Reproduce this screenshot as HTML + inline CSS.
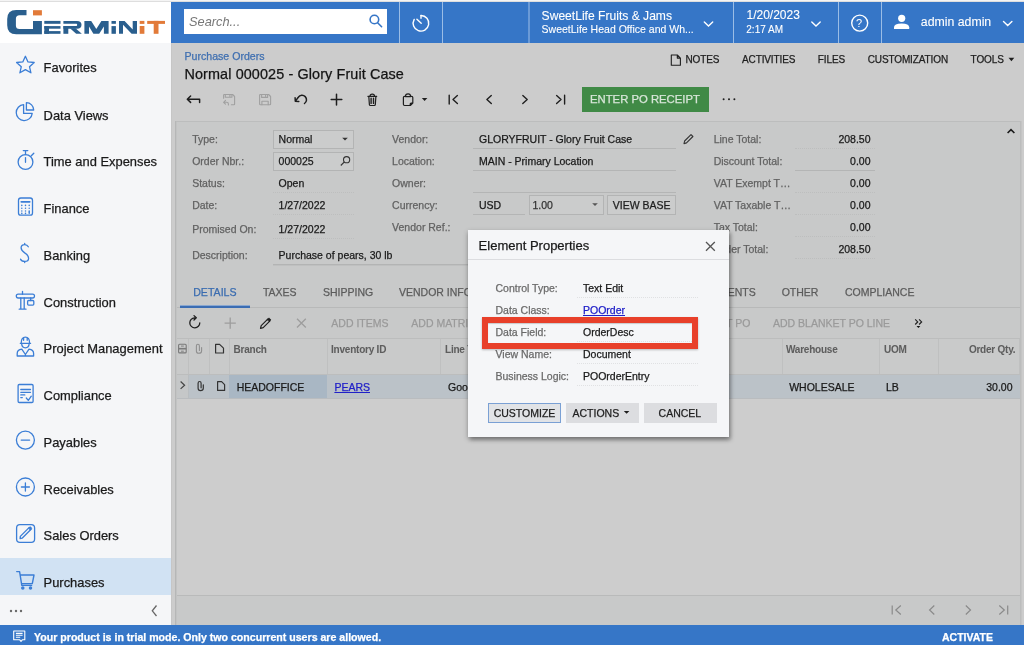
<!DOCTYPE html>
<html><head><meta charset="utf-8"><style>
*{box-sizing:border-box;margin:0;padding:0}
html,body{width:1024px;height:645px;overflow:hidden;background:#cccccc;font-family:"Liberation Sans",sans-serif;color:#1c1c1c;position:relative}
.a{position:absolute;white-space:nowrap;line-height:1;-webkit-text-stroke:0.25px currentColor}
svg{position:absolute;left:0;top:0;overflow:visible}
</style></head><body><div id="root" style="position:absolute;left:0;top:0;width:1024px;height:645px;will-change:transform">
<div class="a" style="left:0px;top:0px;width:1024px;height:1px;background:#f4f4f4;"></div>
<div class="a" style="left:0px;top:1px;width:1024px;height:1px;background:#dedede;"></div>
<div class="a" style="left:0px;top:2px;width:171px;height:41px;background:#ffffff;"></div>
<div class="a" style="left:0px;top:43px;width:171px;height:582px;background:#f5f6f8;"></div>
<div class="a" style="left:171px;top:2px;width:853px;height:41px;background:#3676c7;"></div>
<div class="a" style="left:0px;top:625px;width:1024px;height:20px;background:#3676c7;"></div>
<svg width="1024" height="645">
<g fill="#2a5f8e">
<path d="M26.5 10 L16.2 10 Q7.2 10 7.2 19 L7.2 25.3 Q7.2 34.3 16.2 34.3 L41.9 34.3 L41.9 20.9 L33 20.9 L33 29.1 L19.5 29.1 Q15.9 29.1 15.9 25.5 L15.9 18.8 Q15.9 15.2 19.5 15.2 L26.5 15.2 Z"/>
<rect x="44.3" y="20.9" width="16.2" height="2.9"/><rect x="44.3" y="26.1" width="16.2" height="2.6"/><rect x="44.3" y="31.1" width="16.2" height="2.7"/><rect x="44.3" y="26.1" width="4.7" height="7.7"/>
<path d="M63.4 20.9 L77 20.9 Q81.5 20.9 81.5 24.8 Q81.5 28.7 77 28.7 L63.4 28.7 L63.4 26.1 L76.3 26.1 Q77.2 26.1 77.2 25 Q77.2 23.8 76.3 23.8 L63.4 23.8 Z"/>
<rect x="63.4" y="26.1" width="4.9" height="7.7"/>
<path d="M70 28.2 L75.5 28.2 L81.8 33.8 L76.2 33.8 Z"/>
<path d="M84.4 20.9 L91.2 20.9 L96.3 29 L101.4 20.9 L108.6 20.9 L108.6 33.8 L103.9 33.8 L103.9 26.5 L99.2 33.8 L93.4 33.8 L89 26.5 L89 33.8 L84.4 33.8 Z"/>
<rect x="111.5" y="21" width="4.4" height="2.8"/><rect x="111.5" y="26.1" width="4.4" height="7.7"/>
<path d="M119 20.9 L124.6 20.9 L132.7 29.5 L132.7 20.9 L137 20.9 L137 33.8 L131.6 33.8 L123 24.8 L123 33.8 L119 33.8 Z"/>
</g>
<g fill="#e27a39">
<rect x="33" y="10.2" width="8.9" height="5.2"/>
<rect x="139.7" y="20.9" width="4.7" height="3"/><rect x="139.7" y="26" width="4.7" height="7.8"/>
<rect x="147.2" y="20.9" width="17.8" height="3"/><rect x="153.7" y="20.9" width="4.8" height="12.9"/>
</g></svg>
<div class="a" style="left:184px;top:9px;width:203px;height:25px;background:#ffffff;"></div>
<div class="a" style="left:189px;top:16px;font-size:12.8px;color:#777777;font-style:italic;-webkit-text-stroke:0">Search...</div>
<svg width="1024" height="645">
<g stroke="#3676c7" stroke-width="1.6" fill="none"><circle cx="374.4" cy="19.5" r="4.3"/><path d="M377.6 22.7 L381.6 26.7" stroke-linecap="round"/></g>
<g stroke="#fff" stroke-width="1.4" fill="none" stroke-linecap="round">
<path d="M421 15.5 A7.8 7.8 0 1 1 414.2 19.4"/><path d="M421 15.5 L421 18.3"/><path d="M416.9 19.2 L421.2 23.2"/>
<path d="M704.3 22 L708.5 26 L712.7 22"/>
<path d="M811.8 22 L816 26 L820.2 22"/>
<path d="M1003.5 21.5 L1007.7 25.5 L1011.9 21.5"/>
<circle cx="859.7" cy="23.1" r="8"/>
</g>
<g fill="#fff"><circle cx="901.7" cy="18.3" r="3.6"/><path d="M894 29 L894 27.3 Q894 23.5 901.6 23.5 Q909.2 23.5 909.2 27.3 L909.2 29 Z"/></g>
</svg>
<div class="a" style="left:399px;top:2px;width:1px;height:41px;background:#9bbde6;"></div>
<div class="a" style="left:442px;top:2px;width:1px;height:41px;background:#9bbde6;"></div>
<div class="a" style="left:733px;top:2px;width:1px;height:41px;background:#9bbde6;"></div>
<div class="a" style="left:838px;top:2px;width:1px;height:41px;background:#9bbde6;"></div>
<div class="a" style="left:881px;top:2px;width:1px;height:41px;background:#9bbde6;"></div>
<div class="a" style="left:528px;top:2px;width:2px;height:41px;background:#6a9ad7;"></div>
<div class="a" style="left:541.6px;top:10px;font-size:12.1px;color:#fff;-webkit-text-stroke:0.1px">SweetLife Fruits &amp; Jams</div>
<div class="a" style="left:541.6px;top:24px;font-size:10.5px;color:#fff;-webkit-text-stroke:0.1px">SweetLife Head Office and Wh...</div>
<div class="a" style="left:746.5px;top:9px;font-size:12px;color:#fff;-webkit-text-stroke:0.1px">1/20/2023</div>
<div class="a" style="left:746.3px;top:25px;font-size:10px;color:#fff;-webkit-text-stroke:0.1px">2:17 AM</div>
<div class="a" style="left:856px;top:18px;font-size:11px;color:#fff;-webkit-text-stroke:0">?</div>
<div class="a" style="left:920.8px;top:16px;font-size:12.3px;color:#fff;-webkit-text-stroke:0.1px">admin admin</div>
<div class="a" style="left:0px;top:558px;width:171px;height:37px;background:#d1e2f3;"></div>
<div class="a" style="left:43.6px;top:62px;font-size:12.9px;color:#1a1a1a;">Favorites</div>
<div class="a" style="left:43.6px;top:110px;font-size:12.9px;color:#1a1a1a;">Data Views</div>
<div class="a" style="left:43.6px;top:156px;font-size:12.9px;color:#1a1a1a;">Time and Expenses</div>
<div class="a" style="left:43.6px;top:203px;font-size:12.9px;color:#1a1a1a;">Finance</div>
<div class="a" style="left:43.6px;top:250px;font-size:12.9px;color:#1a1a1a;">Banking</div>
<div class="a" style="left:43.6px;top:297px;font-size:12.9px;color:#1a1a1a;">Construction</div>
<div class="a" style="left:43.6px;top:343px;font-size:12.9px;color:#1a1a1a;">Project Management</div>
<div class="a" style="left:43.6px;top:390px;font-size:12.9px;color:#1a1a1a;">Compliance</div>
<div class="a" style="left:43.6px;top:437px;font-size:12.9px;color:#1a1a1a;">Payables</div>
<div class="a" style="left:43.6px;top:484px;font-size:12.9px;color:#1a1a1a;">Receivables</div>
<div class="a" style="left:43.6px;top:530px;font-size:12.9px;color:#1a1a1a;">Sales Orders</div>
<div class="a" style="left:43.6px;top:577px;font-size:12.9px;color:#1a1a1a;">Purchases</div>
<svg width="200" height="645">
<g stroke="#3b7ed6" fill="none" stroke-width="1.3" stroke-linejoin="round" stroke-linecap="round">
<path d="M25.4 56.3 L28.0 61.9 L34.2 62.5 L29.5 66.7 L30.9 72.8 L25.4 69.6 L19.9 72.8 L21.3 66.7 L16.6 62.5 L22.8 61.9 Z"/>
<path d="M23.6 104.6 A8 8 0 1 0 32.2 113.4 L23.6 113.4 Z"/>
<path d="M26.4 102.7 A7.3 7.3 0 0 1 33.7 110 L26.4 110 Z"/>
<circle cx="25.5" cy="162" r="7.4"/><path d="M23.3 150.6 L27.8 150.6 M25.5 150.6 L25.5 154.5 M25.5 157.6 L25.5 162.3 M31.3 155.8 L33.8 153.2"/>
<rect x="18.5" y="198" width="14" height="17.2" rx="2.3"/><path d="M21.3 201.8 L29.7 201.8" stroke-width="1.8"/>
<path d="M21.8 205.3 v0.1 M25.5 205.3 v0.1 M29.2 205.3 v0.1 M21.8 208.2 v0.1 M25.5 208.2 v0.1 M29.2 208.2 v0.1 M21.8 211 v0.1 M25.5 211 v0.1 M21.8 213.3 v0.1 M25.5 213.3 v0.1 M29.2 211 v2.3" stroke-width="1.5"/>
<path d="M28.3 246.8 Q27.3 244.6 24.7 244.6 Q21.1 244.6 21.1 247.8 Q21.1 250.4 24.7 252.9 Q28.6 255.3 28.6 258.2 Q28.6 261.4 24.7 261.4 Q21.5 261.4 20.6 259.2 M24.7 243.4 L24.7 244.6 M24.7 261.4 L24.7 262.6"/>
<rect x="16.3" y="294.2" width="18.2" height="3.8" rx="1.9"/><path d="M20.8 298 L20.8 309 M24.2 298 L24.2 309 M19.2 309.2 L26 309.2 M22.5 294.2 L22.5 291.3 M30.7 298 L30.7 300.5"/><rect x="27.6" y="300.5" width="6.2" height="4.6" rx="1"/>
<path d="M20.3 343.3 L30.6 343.3 M21.2 343.3 Q21.2 337.2 25.4 337.2 Q29.6 337.2 29.6 343.3 M21.6 343.5 Q21.9 347.8 25.4 347.8 Q28.9 347.8 29.2 343.5 M23.6 337.6 L23.6 340.3 M27.2 337.6 L27.2 340.3"/>
<path d="M17.2 356 L17.2 353.5 Q17.2 349.7 21.8 349.2 L25.4 354.5 L29 349.2 Q33.6 349.7 33.6 353.5 L33.6 356 Z M25.4 354.5 L25.4 356"/>
<rect x="18.1" y="384.5" width="15" height="18" rx="1.2"/><path d="M20.8 389.5 L30.5 389.5 M20.8 392.3 L30.5 392.3 M20.8 394.9 L24.8 394.9 M20.8 397.6 L22.3 397.6 M26.3 398 L28.3 400.4 L31.3 396.2"/>
<circle cx="25.4" cy="440.1" r="9"/><path d="M21.2 440.1 L29.6 440.1"/>
<circle cx="25.4" cy="487" r="9"/><path d="M21.4 487 L29.4 487 M25.4 483 L25.4 491"/>
<rect x="16.6" y="524.6" width="18" height="17.8" rx="3.3"/><path d="M20.3 536.4 L29.3 527.4 L31.1 529.2 L22.1 538.2 L20.1 538.6 Z"/><path d="M28.6 528.1 L29.6 527.1 Q30.2 526.5 30.8 527.1 L31.4 527.7 Q32 528.3 31.4 528.9 L30.4 529.9 Z" fill="#3b7ed6" stroke-width="0.8"/>
<path d="M16.7 571.6 L19.6 571.6 L21.8 585.4 L31.6 585.4 M20.3 575 L34 575 L32.3 583.6 L21.5 583.6" stroke-width="1.4"/><circle cx="22.8" cy="588" r="1.1" fill="#3b7ed6"/><circle cx="30.5" cy="588" r="1.1" fill="#3b7ed6"/>
</g>
<g fill="#6a6a6a"><circle cx="11" cy="611" r="1.2"/><circle cx="16" cy="611" r="1.2"/><circle cx="21" cy="611" r="1.2"/></g>
<path d="M156.5 605.5 L152.3 610.8 L156.5 616" stroke="#666" stroke-width="1.3" fill="none"/>
</svg>
<div class="a" style="left:171px;top:43px;width:1px;height:582px;background:#c6c6c6;"></div>
<div class="a" style="left:184.5px;top:51px;font-size:10.6px;color:#3f6fb0;">Purchase Orders</div>
<div class="a" style="left:184.5px;top:67px;font-size:14.4px;color:#141414;letter-spacing:0.11px">Normal 000025 - Glory Fruit Case</div>
<div class="a" style="left:685.4px;top:55px;font-size:10px;color:#1e1e1e;letter-spacing:-0.12px">NOTES</div>
<div class="a" style="left:742px;top:55px;font-size:10px;color:#1e1e1e;letter-spacing:-0.12px">ACTIVITIES</div>
<div class="a" style="left:817.8px;top:55px;font-size:10px;color:#1e1e1e;letter-spacing:-0.12px">FILES</div>
<div class="a" style="left:867.7px;top:55px;font-size:10px;color:#1e1e1e;letter-spacing:-0.12px">CUSTOMIZATION</div>
<div class="a" style="left:970.6px;top:55px;font-size:10px;color:#1e1e1e;letter-spacing:-0.12px">TOOLS</div>
<svg width="1024" height="645">
<g stroke="#1e1e1e" fill="none" stroke-width="1.1" stroke-linejoin="round">
<path d="M671.3 55 L677.3 55 L680.4 58.1 L680.4 65.2 L671.3 65.2 Z M677.3 55 L677.3 58.1 L680.4 58.1"/>
</g>
<path d="M1008.5 57.8 L1014.3 57.8 L1011.4 61.3 Z" fill="#1e1e1e"/>
</svg>
<svg width="1024" height="645">
<g stroke="#1e1e1e" fill="none" stroke-width="1.5" stroke-linejoin="round" stroke-linecap="round">
<path d="M187.5 99.2 L199.6 99.2 L199.6 102.6 M190.6 96 L187.3 99.2 L190.6 102.4"/>
<path d="M304.5 103.5 A4.5 4.5 0 1 0 298.3 97.2 L295.6 100.9 M295.1 97.7 L295.3 101.2 L298.8 101.5"/>
<path d="M336.5 94.2 L336.5 104.9 M331.2 99.5 L341.8 99.5"/>
<path d="M367.9 96.3 L376.7 96.3 M370 96.2 Q370 94.2 372.3 94.2 Q374.5 94.2 374.5 96.2 M368.8 96.4 L369.4 104.6 Q369.5 105.5 370.4 105.5 L374.3 105.5 Q375.2 105.5 375.3 104.6 L375.9 96.4" stroke-width="1.2"/><path d="M371.1 98.3 L371.1 103.4 M373.5 98.3 L373.5 103.4" stroke-width="1.4"/>
<path d="M405.4 96.3 L404.6 96.3 Q403.4 96.3 403.4 97.5 L403.4 104.3 Q403.4 105.5 404.6 105.5 L410.3 105.5 L412.8 103 L412.8 97.5 Q412.8 96.3 411.6 96.3 L410.6 96.3 M405.4 96.6 Q405.4 93.8 408.1 93.8 Q410.6 93.8 410.6 96.6 Z M410.2 105.4 L410.2 104 Q410.2 103.1 411.1 103.1 L412.7 103.1" stroke-width="1.2"/>
<path d="M449.2 95.2 L449.2 104 M457.4 95.6 L453 99.6 L457.4 103.6" stroke-width="1.4"/>
<path d="M491.3 95.6 L486.9 99.6 L491.3 103.6" stroke-width="1.4"/>
<path d="M522.8 95.6 L527.2 99.6 L522.8 103.6" stroke-width="1.4"/>
<path d="M564.6 95.2 L564.6 104 M556.6 95.6 L561 99.6 L556.6 103.6" stroke-width="1.4"/>
</g>
<g stroke="#a0a0a0" fill="none" stroke-width="1.1" stroke-linejoin="round" stroke-linecap="round">
<path d="M223.6 98.3 L223.6 95.2 Q223.6 94.5 224.3 94.5 L232.6 94.5 L234.6 96.5 L234.6 104.1 Q234.6 104.8 233.9 104.8 L231.4 104.8"/>
<path d="M225.3 94.6 L225.3 97.3 L231.9 97.3 L231.9 94.6 M229.9 94.8 L229.9 96.2"/>
<path d="M223.6 102.3 L226.6 102.3 Q228.4 102.3 228.4 104 L228.4 104.9 M225.5 100.4 L223.6 102.3 L225.5 104.2"/>
<path d="M260.3 94.5 L268.6 94.5 L270.6 96.5 L270.6 104.1 Q270.6 104.8 269.9 104.8 L260.3 104.8 Q259.6 104.8 259.6 104.1 L259.6 95.2 Q259.6 94.5 260.3 94.5 Z"/>
<path d="M261.6 94.6 L261.6 97.4 L267.6 97.4 L267.6 94.6 M265.6 94.8 L265.6 96.2 M261.9 104.7 L261.9 101.3 L268.2 101.3 L268.2 104.7"/>
</g>
<path d="M421.8 98 L427.4 98 L424.6 101 Z" fill="#1e1e1e"/>
<g fill="#1e1e1e"><circle cx="723.6" cy="99.3" r="1"/><circle cx="729" cy="99.3" r="1"/><circle cx="734.4" cy="99.3" r="1"/></g>
</svg>
<div class="a" style="left:582px;top:87px;width:127px;height:25px;background:#408a46;"></div>
<div class="a" style="left:590px;top:94px;font-size:11.3px;color:#d8e6d9;">ENTER PO RECEIPT</div>
<div class="a" style="left:175px;top:121px;width:846px;height:504px;background:#c8c9c9;border:1px solid #bcbdbd;border-bottom:none;border-left-color:#b6b7b7"></div>
<div class="a" style="left:192.2px;top:134px;font-size:10.5px;color:#626262;">Type:</div>
<div class="a" style="left:192.2px;top:156px;font-size:10.5px;color:#626262;">Order Nbr.:</div>
<div class="a" style="left:192.2px;top:178px;font-size:10.5px;color:#626262;">Status:</div>
<div class="a" style="left:192.2px;top:200px;font-size:10.5px;color:#626262;">Date:</div>
<div class="a" style="left:192.2px;top:224px;font-size:10.5px;color:#626262;">Promised On:</div>
<div class="a" style="left:192.2px;top:250px;font-size:10.5px;color:#626262;">Description:</div>
<div class="a" style="left:273px;top:130px;width:81px;height:19px;background:#cbcccc;border:1px solid #b3b4b4"></div>
<div class="a" style="left:273px;top:152px;width:81px;height:19px;background:#cbcccc;border:1px solid #b3b4b4"></div>
<div class="a" style="left:278.6px;top:134px;font-size:10.5px;color:#1a1a1a;">Normal</div>
<div class="a" style="left:278.6px;top:156px;font-size:10.5px;color:#1a1a1a;">000025</div>
<div class="a" style="left:278.6px;top:178px;font-size:10.5px;color:#1a1a1a;">Open</div>
<div class="a" style="left:278.6px;top:200px;font-size:10.5px;color:#1a1a1a;">1/27/2022</div>
<div class="a" style="left:278.6px;top:224px;font-size:10.5px;color:#1a1a1a;">1/27/2022</div>
<div class="a" style="left:278.6px;top:250px;font-size:10.5px;color:#1a1a1a;">Purchase of pears, 30 lb</div>
<div class="a" style="left:273px;top:192px;width:81px;height:1px;border-top:1px dotted #bdbebe"></div>
<div class="a" style="left:273px;top:214px;width:81px;height:1px;border-top:1px dotted #bdbebe"></div>
<div class="a" style="left:273px;top:238px;width:81px;height:1px;border-top:1px dotted #bdbebe"></div>
<div class="a" style="left:273px;top:264px;width:403px;height:1px;background:#b3b4b4;"></div>
<div class="a" style="left:273px;top:265px;width:403px;height:1px;background:#bfc0c0;"></div>
<svg width="1024" height="645">
<path d="M342.2 137.8 L347.8 137.8 L345 140.6 Z" fill="#333"/>
<g stroke="#333" fill="none" stroke-width="1.1"><circle cx="346.6" cy="159.7" r="3.1"/><path d="M344.4 161.9 L340.8 165.5"/></g>
</svg>
<div class="a" style="left:392.1px;top:134px;font-size:10.5px;color:#626262;">Vendor:</div>
<div class="a" style="left:392.1px;top:156px;font-size:10.5px;color:#626262;">Location:</div>
<div class="a" style="left:392.1px;top:178px;font-size:10.5px;color:#626262;">Owner:</div>
<div class="a" style="left:392.1px;top:200px;font-size:10.5px;color:#626262;">Currency:</div>
<div class="a" style="left:392.1px;top:222px;font-size:10.5px;color:#626262;">Vendor Ref.:</div>
<div class="a" style="left:479px;top:134px;font-size:10.5px;color:#1a1a1a;">GLORYFRUIT - Glory Fruit Case</div>
<div class="a" style="left:479px;top:156px;font-size:10.5px;color:#1a1a1a;">MAIN - Primary Location</div>
<div class="a" style="left:479px;top:200px;font-size:10.5px;color:#1a1a1a;">USD</div>
<div class="a" style="left:473px;top:148px;width:203px;height:1px;background:#b4b5b5;"></div>
<div class="a" style="left:473px;top:170px;width:203px;height:1px;background:#b4b5b5;"></div>
<div class="a" style="left:473px;top:192px;width:203px;height:1px;background:#b4b5b5;"></div>
<div class="a" style="left:473px;top:214px;width:52px;height:1px;background:#b4b5b5;"></div>
<div class="a" style="left:529px;top:195px;width:75px;height:20px;background:#cbcccc;border:1px solid #b3b4b4"></div>
<div class="a" style="left:532.5px;top:200px;font-size:10.5px;color:#333;">1.00</div>
<div class="a" style="left:607px;top:195px;width:69px;height:20px;background:#cbcccc;border:1px solid #b3b4b4"></div>
<div class="a" style="left:612.8px;top:200px;font-size:10.5px;color:#1e1e1e;">VIEW BASE</div>
<svg width="1024" height="645">
<path d="M592.2 203.3 L597.8 203.3 L595 206.1 Z" fill="#555"/>
<g stroke="#333" fill="none" stroke-width="1.1" stroke-linejoin="round"><path d="M684 143.6 L684.6 141 L691 134.6 L692.9 136.5 L686.5 142.9 Z"/></g>
<path d="M1007.6 133 L1011 129.6 L1014.4 133" stroke="#1a1a1a" stroke-width="1.6" fill="none"/>
</svg>
<div class="a" style="left:713.7px;top:134px;font-size:10.5px;color:#626262;">Line Total:</div>
<div class="a" style="right:153.5px;top:134px;font-size:10.5px;color:#1a1a1a;">208.50</div>
<div class="a" style="left:713.7px;top:156px;font-size:10.5px;color:#626262;">Discount Total:</div>
<div class="a" style="right:153.5px;top:156px;font-size:10.5px;color:#1a1a1a;">0.00</div>
<div class="a" style="left:713.7px;top:178px;font-size:10.5px;color:#626262;">VAT Exempt T…</div>
<div class="a" style="right:153.5px;top:178px;font-size:10.5px;color:#1a1a1a;">0.00</div>
<div class="a" style="left:713.7px;top:200px;font-size:10.5px;color:#626262;">VAT Taxable T…</div>
<div class="a" style="right:153.5px;top:200px;font-size:10.5px;color:#1a1a1a;">0.00</div>
<div class="a" style="left:713.7px;top:222px;font-size:10.5px;color:#626262;">Tax Total:</div>
<div class="a" style="right:153.5px;top:222px;font-size:10.5px;color:#1a1a1a;">0.00</div>
<div class="a" style="left:713.7px;top:244px;font-size:10.5px;color:#626262;">Order Total:</div>
<div class="a" style="right:153.5px;top:244px;font-size:10.5px;color:#1a1a1a;">208.50</div>
<div class="a" style="left:795px;top:148px;width:80px;height:1px;border-top:1px dotted #bdbebe"></div>
<div class="a" style="left:795px;top:192px;width:80px;height:1px;border-top:1px dotted #bdbebe"></div>
<div class="a" style="left:795px;top:214px;width:80px;height:1px;border-top:1px dotted #bdbebe"></div>
<div class="a" style="left:795px;top:236px;width:80px;height:1px;border-top:1px dotted #bdbebe"></div>
<div class="a" style="left:795px;top:258px;width:80px;height:1px;border-top:1px dotted #bdbebe"></div>
<div class="a" style="left:795px;top:170px;width:80px;height:1px;background:#b4b5b5;"></div>
<div class="a" style="left:193.2px;top:287px;font-size:10.6px;color:#3a6cb0;">DETAILS</div>
<div class="a" style="left:262.9px;top:287px;font-size:10.5px;color:#5c5c5c;">TAXES</div>
<div class="a" style="left:323px;top:287px;font-size:10.5px;color:#5c5c5c;">SHIPPING</div>
<div class="a" style="left:399px;top:287px;font-size:10.5px;color:#5c5c5c;">VENDOR INFO</div>
<div class="a" style="left:699.5px;top:287px;font-size:10.5px;color:#5c5c5c;">PAYMENTS</div>
<div class="a" style="left:781.7px;top:287px;font-size:10.5px;color:#5c5c5c;">OTHER</div>
<div class="a" style="left:845px;top:287px;font-size:10.5px;color:#5c5c5c;">COMPLIANCE</div>
<div class="a" style="left:176px;top:307px;width:844px;height:1px;background:#b8b9b9;"></div>
<div class="a" style="left:180px;top:305px;width:70px;height:1px;background:#8aa7cf;"></div>
<div class="a" style="left:180px;top:306px;width:70px;height:2px;background:#3b6db3;"></div>
<svg width="1024" height="645">
<g stroke="#1e1e1e" fill="none" stroke-width="1.3" stroke-linecap="round" stroke-linejoin="round">
<path d="M199.8 322.8 A5 5 0 1 1 194.6 317.8 M194 315.6 L196.3 317.8 L194 320"/>
<path d="M260.5 328.3 L261.2 325.6 L268 318.8 L270 320.8 L263.2 327.6 Z" stroke-width="1.2"/><path d="M267.4 319.4 L268.3 318.5 Q269 317.8 269.7 318.5 L270.3 319.1 Q271 319.8 270.3 320.5 L269.4 321.4 Z" fill="#1e1e1e" stroke-width="0.8"/>
</g>
<g stroke="#9d9d9d" fill="none" stroke-width="1.3">
<path d="M230.2 317.5 L230.2 328.7 M224.6 323.1 L235.8 323.1"/>
<path d="M297 318.7 L305.8 327.5 M305.8 318.7 L297 327.5"/>
</g>
<g stroke="#222" fill="none" stroke-width="1.2"><path d="M915.2 319.3 L917.7 321.9 L915.2 324.5 M919.1 319.3 L921.6 321.9 L919.1 324.5"/></g>
<path d="M916.5 326 L920.3 326 L918.4 328 Z" fill="#111"/>
</svg>
<div class="a" style="left:331.3px;top:318px;font-size:10.5px;color:#9a9a9a;">ADD ITEMS</div>
<div class="a" style="left:411.3px;top:318px;font-size:10.5px;color:#9a9a9a;">ADD MATRIX ITEMS</div>
<div class="a" style="left:773px;top:318px;font-size:10.5px;color:#9a9a9a;">ADD BLANKET PO LINE</div>
<div class="a" style="right:273.70000000000005px;top:318px;font-size:10.5px;color:#9a9a9a;">CREATE SUBCONTRACT PO</div>
<div class="a" style="left:176px;top:338px;width:844px;height:1px;background:#bcbdbd;"></div>
<div class="a" style="left:176px;top:339px;width:844px;height:35px;background:#c9caca;"></div>
<div class="a" style="left:176px;top:374px;width:844px;height:1px;background:#bcbdbd;"></div>
<div class="a" style="left:188px;top:339px;width:1px;height:35px;background:#bfc0c0;"></div>
<div class="a" style="left:209px;top:339px;width:1px;height:35px;background:#bfc0c0;"></div>
<div class="a" style="left:229px;top:339px;width:1px;height:35px;background:#bfc0c0;"></div>
<div class="a" style="left:327px;top:339px;width:1px;height:35px;background:#bfc0c0;"></div>
<div class="a" style="left:440px;top:339px;width:1px;height:35px;background:#bfc0c0;"></div>
<div class="a" style="left:782px;top:339px;width:1px;height:35px;background:#bfc0c0;"></div>
<div class="a" style="left:879px;top:339px;width:1px;height:35px;background:#bfc0c0;"></div>
<div class="a" style="left:938px;top:339px;width:1px;height:35px;background:#bfc0c0;"></div>
<div class="a" style="left:1019px;top:339px;width:1px;height:35px;background:#bfc0c0;"></div>
<div class="a" style="left:233.5px;top:345px;font-size:10px;color:#5e5e5e;font-weight:bold;letter-spacing:-0.22px;-webkit-text-stroke:0.05px">Branch</div>
<div class="a" style="left:331px;top:345px;font-size:10px;color:#5e5e5e;font-weight:bold;letter-spacing:-0.22px;-webkit-text-stroke:0.05px">Inventory ID</div>
<div class="a" style="left:445px;top:345px;font-size:10px;color:#5e5e5e;font-weight:bold;letter-spacing:-0.22px;-webkit-text-stroke:0.05px">Line Type</div>
<div class="a" style="left:786px;top:345px;font-size:10px;color:#5e5e5e;font-weight:bold;letter-spacing:-0.22px;-webkit-text-stroke:0.05px">Warehouse</div>
<div class="a" style="left:884px;top:345px;font-size:10px;color:#5e5e5e;font-weight:bold;letter-spacing:-0.22px;-webkit-text-stroke:0.05px">UOM</div>
<div class="a" style="right:8.600000000000023px;top:345px;font-size:10px;color:#5e5e5e;font-weight:bold;letter-spacing:-0.22px;-webkit-text-stroke:0.05px">Order Qty.</div>
<div class="a" style="left:399px;top:399px;width:1px;height:1px;background:#cdcdcd;"></div>
<div class="a" style="left:176px;top:399px;width:845px;height:196px;background:#cdcdcd;"></div>
<div class="a" style="left:176px;top:375px;width:845px;height:23px;background:#bbc2c8;"></div>
<div class="a" style="left:229px;top:375px;width:98px;height:23px;background:#a9b7c4;"></div>
<div class="a" style="left:176px;top:398px;width:844px;height:1px;background:#b9bcbf;"></div>
<div class="a" style="left:236.7px;top:382px;font-size:10.5px;color:#1a1a1a;">HEADOFFICE</div>
<div class="a" style="left:334.4px;top:382px;font-size:10.5px;color:#2020c8;"><span style="text-decoration:underline">PEARS</span></div>
<div class="a" style="left:448px;top:382px;font-size:10.5px;color:#1a1a1a;">Goods for IN</div>
<div class="a" style="left:789.2px;top:382px;font-size:10.5px;color:#1a1a1a;">WHOLESALE</div>
<div class="a" style="left:886px;top:382px;font-size:10.5px;color:#1a1a1a;">LB</div>
<div class="a" style="right:11.5px;top:382px;font-size:10.5px;color:#1a1a1a;">30.00</div>
<svg width="1024" height="645">
<rect x="176" y="375" width="12.5" height="23" fill="#c5c7c8"/>
<rect x="188" y="375" width="1" height="23" fill="#b9bdc0"/>
<g stroke="#7a7a7a" fill="none" stroke-width="1.1"><rect x="178.6" y="344.3" width="7.6" height="8.6" rx="1"/></g>
<rect x="178.6" y="347.9" width="7.6" height="1.6" fill="#7a7a7a"/>
<path d="M181 346.1 L183.8 346.1 M181 351.2 L183.8 351.2" stroke="#7a7a7a" stroke-width="0.9"/>
<g stroke="#8f8f8f" fill="none" stroke-width="1.1" stroke-linecap="round"><path d="M199.4 350.5 L199.4 346 Q199.4 344.2 197.9 344.2 Q196.4 344.2 196.4 346 L196.4 351 Q196.4 353.3 198.8 353.3 Q201.6 353.3 201.6 351 L201.6 347.5"/></g>
<g stroke="#333" fill="none" stroke-width="1.2" stroke-linejoin="round"><path d="M215.6 344.3 L219.6 344.3 L223.5 348.2 L223.5 353 L215.6 353 Z"/></g>
<path d="M180.6 381.5 L184.6 385.2 L180.6 388.9" stroke="#444" stroke-width="1.2" fill="none"/>
<g stroke="#333" fill="none" stroke-width="1.2" stroke-linecap="round"><path d="M201.1 387.8 L201.1 383.3 Q201.1 381.5 199.6 381.5 Q198.1 381.5 198.1 383.3 L198.1 388.3 Q198.1 390.6 200.5 390.6 Q203.3 390.6 203.3 388.3 L203.3 384.8"/></g>
<g stroke="#333" fill="none" stroke-width="1.2" stroke-linejoin="round"><path d="M217.6 381.7 L221.6 381.7 L224.6 384.7 L224.6 390.4 L217.6 390.4 Z"/></g>
</svg>
<div class="a" style="left:176px;top:595px;width:845px;height:1px;background:#b9baba;"></div>
<div class="a" style="left:176px;top:596px;width:845px;height:29px;background:#c8c9c9;"></div>
<svg width="1024" height="645">
<g stroke="#8a8a8a" fill="none" stroke-width="1.2">
<path d="M892.2 605.4 L892.2 614.6 M900.8 605.5 L895.8 610 L900.8 614.5"/>
<path d="M934.3 605.5 L929.6 610 L934.3 614.5"/>
<path d="M965.8 605.5 L970.5 610 L965.8 614.5"/>
<path d="M1007.7 605.4 L1007.7 614.6 M999.3 605.5 L1004.3 610 L999.3 614.5"/>
</g></svg>
<div class="a" style="left:175px;top:121px;width:1px;height:504px;background:#b6b7b7;"></div>
<div class="a" style="left:176px;top:122px;width:1px;height:503px;background:#c2c3c3;"></div>
<div class="a" style="left:1020px;top:121px;width:1px;height:504px;background:#bcbdbd;"></div>
<div class="a" style="left:1021px;top:121px;width:1px;height:504px;background:#c4c4c4;"></div>
<svg width="1024" height="645">
<g stroke="#fff" fill="none" stroke-width="1.1" stroke-linejoin="round"><path d="M13.7 631 L24.8 631 L24.8 639.8 L22.3 639.8 L21 641.3 L19.8 639.8 L13.7 639.8 Z M15.9 633.4 L22.6 633.4 M15.9 635.3 L22.6 635.3 M15.9 637.2 L20.2 637.2"/></g>
</svg>
<div class="a" style="left:34px;top:632px;font-size:10.6px;color:#fff;font-weight:bold;">Your product is in trial mode. Only two concurrent users are allowed.</div>
<div class="a" style="left:942px;top:632px;font-size:10.5px;color:#fff;font-weight:bold;">ACTIVATE</div>
<div class="a" style="left:468px;top:230px;width:261px;height:207px;background:#f5f6f8;box-shadow:0 2px 5px rgba(0,0,0,0.3), 2px 3px 4px rgba(0,0,0,0.25)"></div>
<div class="a" style="left:478.6px;top:239px;font-size:13px;color:#1a1a1a;">Element Properties</div>
<div class="a" style="left:468px;top:259px;width:261px;height:1px;background:#dcdde0;"></div>
<svg width="1024" height="645"><path d="M706 242 L714.8 250.8 M714.8 242 L706 250.8" stroke="#555" stroke-width="1.3" fill="none"/></svg>
<div class="a" style="left:495.5px;top:283px;font-size:10.5px;color:#6a6a6a;">Control Type:</div>
<div class="a" style="left:583px;top:283px;font-size:10.5px;color:#1a1a1a;">Text Edit</div>
<div class="a" style="left:495.5px;top:305px;font-size:10.5px;color:#6a6a6a;">Data Class:</div>
<div class="a" style="left:583px;top:305px;font-size:10.5px;color:#2020c8;"><span style="text-decoration:underline">POOrder</span></div>
<div class="a" style="left:495.5px;top:327px;font-size:10.5px;color:#6a6a6a;">Data Field:</div>
<div class="a" style="left:583px;top:327px;font-size:10.5px;color:#1a1a1a;">OrderDesc</div>
<div class="a" style="left:495.5px;top:349px;font-size:10.5px;color:#6a6a6a;">View Name:</div>
<div class="a" style="left:583px;top:349px;font-size:10.5px;color:#1a1a1a;">Document</div>
<div class="a" style="left:495.5px;top:371px;font-size:10.5px;color:#6a6a6a;">Business Logic:</div>
<div class="a" style="left:583px;top:371px;font-size:10.5px;color:#1a1a1a;">POOrderEntry</div>
<div class="a" style="left:577px;top:297px;width:121px;height:1px;border-top:1px dotted #e0e1e3"></div>
<div class="a" style="left:577px;top:341px;width:121px;height:1px;border-top:1px dotted #e0e1e3"></div>
<div class="a" style="left:577px;top:363px;width:121px;height:1px;border-top:1px dotted #e0e1e3"></div>
<div class="a" style="left:577px;top:385px;width:121px;height:1px;border-top:1px dotted #e0e1e3"></div>
<div class="a" style="left:488px;top:403px;width:73px;height:20px;background:#e1e3e6;border:1px solid #7aa0d4"></div>
<div class="a" style="left:566px;top:403px;width:73px;height:20px;background:#dcdde0;"></div>
<div class="a" style="left:644px;top:403px;width:73px;height:20px;background:#dcdde0;"></div>
<div class="a" style="left:493.7px;top:408px;font-size:10.5px;color:#1e1e1e;">CUSTOMIZE</div>
<div class="a" style="left:572.5px;top:408px;font-size:10.5px;color:#1e1e1e;">ACTIONS</div>
<div class="a" style="left:658.6px;top:408px;font-size:10.5px;color:#1e1e1e;">CANCEL</div>
<svg width="1024" height="645"><path d="M623.8 411 L629.4 411 L626.6 413.8 Z" fill="#1e1e1e"/></svg>
<div class="a" style="left:482px;top:317px;width:216px;height:32px;background:transparent;border:6px solid #e8402a;box-shadow:0 1px 2px rgba(0,0,0,0.25), inset 0 1px 1px rgba(0,0,0,0.18)"></div>
</div></body></html>
